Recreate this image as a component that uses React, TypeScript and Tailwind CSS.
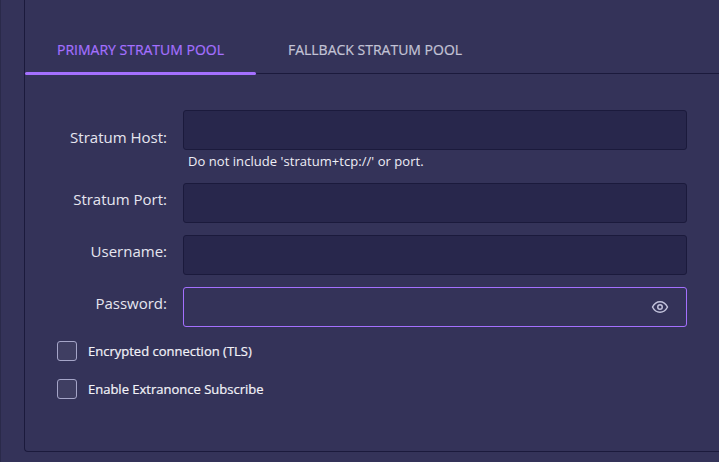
import React from "react";

function Field({ label, focused, icon, top }: { label: string; focused?: boolean; icon?: boolean; top: string }) {
  return (
    <div className="flex items-start">
      <label className={`w-[142px] shrink-0 text-right text-[15px] leading-[20px] text-[#e6e6f0] ${top}`}>{label}</label>
      <div
        className={
          focused
            ? "ml-[16px] flex h-[40px] w-[504px] items-center justify-end rounded-[3px] border border-[#a470ff] bg-[#343359] pr-[17px]"
            : "ml-[16px] h-[40px] w-[504px] rounded-[3px] border border-[#1b1a3c] bg-[#28274c]"
        }
      >
        {icon && (
          <svg width="18" height="18" viewBox="0 0 24 24" fill="none" stroke="#c3c3dc" strokeWidth="2" strokeLinecap="round" strokeLinejoin="round">
            <path d="M2 12s3.6-7 10-7 10 7 10 7-3.6 7-10 7-10-7-10-7z" />
            <circle cx="12" cy="12" r="3" />
          </svg>
        )}
      </div>
    </div>
  );
}

function Check({ label }: { label: string }) {
  return (
    <div className="flex h-[20px] items-center">
      <div className="h-[20px] w-[20px] rounded-[3px] border border-[#a5a5c8] bg-[#3f3e62]" />
      <span className="ml-[11px] text-[13px] font-medium leading-[20px] text-[#f2f2f8] [-webkit-text-stroke:0.2px_#f2f2f8]">{label}</span>
    </div>
  );
}

export default function App() {
  return (
    <div
      className="h-[462px] w-[719px] overflow-hidden border-l border-[#2a2a4a] bg-[#343359] pl-[23px]"
      style={{ fontFamily: '"Open Sans", sans-serif' }}
    >
      <div className="h-[452px] w-[760px] rounded-bl-[4px] border-b border-l border-[#1b1a3c]">
        <div className="flex h-[74px] items-end border-b border-[#1b1a3c]">
          <div className="relative flex h-[33px] w-[231px] justify-center">
            <span className="text-[14px] font-medium leading-[20px] text-[#a470ff] [-webkit-text-stroke:0.2px_#a470ff]">PRIMARY STRATUM POOL</span>
            <div className="absolute bottom-[-2px] left-0 right-0 h-[3px] rounded-[2px] bg-[#a470ff]" />
          </div>
          <div className="flex h-[33px] w-[238px] justify-center">
            <span className="text-[14px] font-medium leading-[20px] text-[#c3c3d6] [-webkit-text-stroke:0.2px_#c3c3d6]">FALLBACK STRATUM POOL</span>
          </div>
        </div>
        <div className="flex flex-col pt-[36px]">
          <Field label="Stratum Host:" top="pt-[17px]" />
          <div className="ml-[163px] mt-[1px] h-[22px] text-[13px] tracking-[0.05px] leading-[20px] text-[#eeeef6]">Do not include 'stratum+tcp://' or port.</div>
          <div className="mt-[10px] flex flex-col gap-[12px]">
            <Field label="Stratum Port:" top="pt-[6px]" />
            <Field label="Username:" top="pt-[6px]" />
            <Field label="Password:" focused icon top="pt-[6px]" />
          </div>
          <div className="ml-[32px] mt-[14px] flex flex-col gap-[18px]">
            <Check label="Encrypted connection (TLS)" />
            <Check label="Enable Extranonce Subscribe" />
          </div>
        </div>
      </div>
    </div>
  );
}
